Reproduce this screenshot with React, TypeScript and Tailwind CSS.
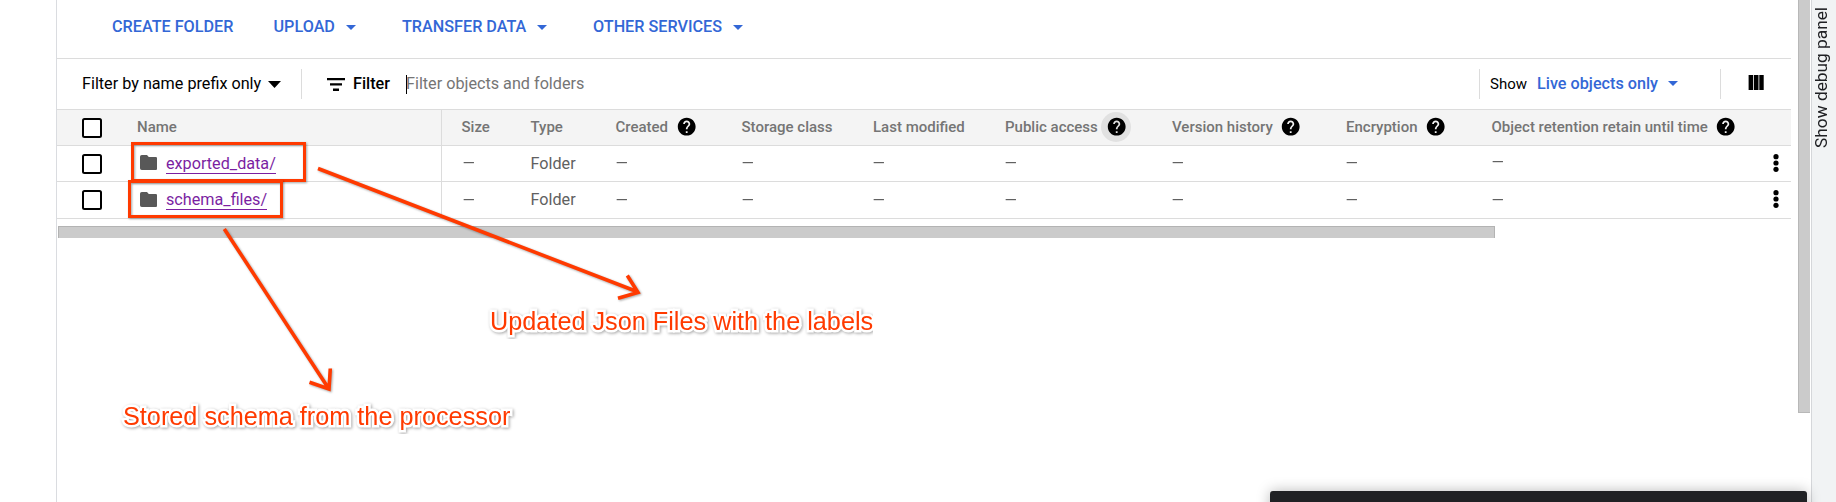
import type { ReactNode } from 'react';

const GRID =
  'grid grid-cols-[80px_305px_88.5px_85px_126px_131.5px_132px_167px_174px_145.5px_1fr] border-b border-[#dcdcdc]';

function Caret({ className = '' }: { className?: string }) {
  return (
    <svg viewBox="0 0 10 5" className={`h-[5px] w-2.5 shrink-0 ${className}`}>
      <path d="M0 0h10L5 5z" fill="currentColor" />
    </svg>
  );
}

function HelpIcon() {
  return (
    <svg viewBox="0 0 24 24" className="size-[21.4px] shrink-0">
      <path d="M12 2C6.48 2 2 6.48 2 12s4.48 10 10 10 10-4.48 10-10S17.52 2 12 2zm1 17h-2v-2h2v2zm2.07-7.75-.9.92C13.45 12.9 13 13.5 13 15h-2v-.5c0-1.1.45-2.1 1.17-2.83l1.24-1.26c.37-.36.59-.86.59-1.41 0-1.1-.9-2-2-2s-2 .9-2 2H8c0-2.21 1.79-4 4-4s4 1.79 4 4c0 .88-.36 1.68-.93 2.25z" />
    </svg>
  );
}

function Checkbox() {
  return <span className="block size-5 rounded-[2.5px] border-2 border-black bg-white" />;
}

function Header({ label, help, hovered }: { label: string; help?: boolean; hovered?: boolean }) {
  return (
    <div className="flex items-center whitespace-nowrap">
      {label}
      {help && (
        <span
          className={
            hovered
              ? 'mb-px ml-[3.5px] flex size-[30px] items-center justify-center rounded-full bg-[#e1e1e1] text-black'
              : 'mb-0.5 ml-[7.5px] text-black'
          }
        >
          <HelpIcon />
        </span>
      )}
    </div>
  );
}

function Dash() {
  return <span className="-ml-px inline-block origin-left scale-x-[1.3]">–</span>;
}

function Row({ name, height, textOffset, lastDash }: { name: string; height: string; textOffset: string; lastDash: string }) {
  return (
    <div className={`${GRID} ${height} text-[16.2px] text-[#616161]`}>
      <div className="flex items-center pl-[25px]">
        <Checkbox />
      </div>
      <div className="flex items-center border-r border-[#dcdcdc] pl-[2.5px]">
        <svg viewBox="0 0 18 15" className="mb-0.5 h-[15px] w-[17.5px]" preserveAspectRatio="none">
          <path d="M1.8 0h5.4L9 2h7.2Q18 2 18 3.8v9.4Q18 15 16.2 15H1.8Q0 15 0 13.2V1.8Q0 0 1.8 0z" fill="#585858" />
        </svg>
        <a className={`ml-[9px] h-[19px] border-b border-[#7b1fa2] leading-[17px] text-[#7b1fa2] ${textOffset}`}>
          {name}
        </a>
      </div>
      <div className="flex items-center pt-0.5 pl-[20.5px]">
        <Dash />
      </div>
      <div className={`flex items-center ${textOffset}`}>Folder</div>
      {['created', 'storage', 'modified', 'access', 'history', 'encryption'].map((key) => (
        <div key={key} className="flex items-center pt-0.5">
          <Dash />
        </div>
      ))}
      <div className="flex items-center justify-between">
        <span className={lastDash}>
          <Dash />
        </span>
        <svg viewBox="0 0 6 18" className="mr-3 mb-0.5 h-[18px] w-1.5">
          <circle cx="3" cy="2.7" r="2.6" fill="#000" />
          <circle cx="3" cy="9" r="2.6" fill="#000" />
          <circle cx="3" cy="15.3" r="2.6" fill="#000" />
        </svg>
      </div>
    </div>
  );
}

function Action({ label, className, menu }: { label: string; className: string; menu?: boolean }) {
  return (
    <div className={`flex shrink-0 items-center whitespace-nowrap ${className}`}>
      {label}
      {menu && <Caret className="ml-[11px]" />}
    </div>
  );
}

function Note({ className, children }: { className: string; children: ReactNode }) {
  return (
    <div
      className={`absolute overflow-hidden font-['Liberation_Sans',sans-serif] text-[25.25px] leading-9 whitespace-nowrap text-[#ff3a00] ${className}`}
    >
      <span className="block pl-2 drop-shadow-[1px_1.5px_1.5px_rgba(0,0,0,0.35)] [-webkit-text-stroke:5px_white] [paint-order:stroke_fill] [stroke-linejoin:round]">
        {children}
      </span>
    </div>
  );
}

export default function App() {
  return (
    <div className="relative flex h-[502px] w-[1836px] overflow-hidden bg-white font-[Roboto,sans-serif] text-black">
      <div className="w-[57px] shrink-0 border-r border-[#dadce0]" />

      <main className="flex w-[1734px] shrink-0 flex-col">
        <div className="flex h-[59px] shrink-0 border-b border-[#dcdcdc] pb-[3px] text-[16.2px] font-medium text-[#3367d6]">
          <Action label="CREATE FOLDER" className="ml-[55px] w-[161.5px]" />
          <Action label="UPLOAD" className="w-[128.5px]" menu />
          <Action label="TRANSFER DATA" className="w-[191px]" menu />
          <Action label="OTHER SERVICES" className="" menu />
        </div>

        <div className="flex h-[51px] shrink-0 items-center border-b border-[#dcdcdc] text-[16.2px] whitespace-nowrap">
          <span className="ml-[25px] w-[186px]">Filter by name prefix only</span>
          <svg viewBox="0 0 13 7" className="h-[7px] w-[13px]">
            <path d="M0 0h13L6.5 7z" />
          </svg>
          <span className="ml-5 h-[30px] border-l border-[#dcdcdc]" />
          <svg viewBox="0 0 18 13" className="ml-[25px] h-[13px] w-[18px]">
            <path d="M0 0h18v2.3H0zM3 5.3h12v2.3H3zM6 10.5h6v2.4H6z" />
          </svg>
          <span className="ml-2 w-[53px] font-medium">Filter</span>
          <span className="h-[19px] border-l border-black" />
          <span className="-ml-px text-[#757575]">Filter objects and folders</span>
          <div className="ml-auto flex h-[30px] items-center border-l border-[#dcdcdc]">
            <span className="ml-2.5 text-[15px]">Show</span>
            <span className="ml-[10px] flex items-center font-medium text-[#3367d6]">
              Live objects only
              <Caret className="ml-2.5" />
            </span>
          </div>
          <div className="mr-[27px] ml-[42px] flex h-[30px] items-center border-l border-[#dcdcdc] pl-[27px]">
            <svg viewBox="0 0 16 15" className="mb-[3px] h-[15px] w-4">
              <path d="M0.6 0h4.6v15H0.6zM6 0h4.5v15H6zM11.3 0h4.4v15h-4.4z" />
            </svg>
          </div>
        </div>

        <div className={`${GRID} h-9 bg-[#f4f4f4] text-[15px] font-medium text-[#757575]`}>
          <div className="flex items-center pt-px pl-[25px]">
            <Checkbox />
          </div>
          <div className="flex items-center border-r border-[#dcdcdc]">Name</div>
          <div className="flex items-center pl-[19.5px]">Size</div>
          <Header label="Type" />
          <Header label="Created" help />
          <Header label="Storage class" />
          <Header label="Last modified" />
          <Header label="Public access" help hovered />
          <Header label="Version history" help />
          <Header label="Encryption" help />
          <Header label="Object retention retain until time" help />
        </div>
        <Row name="exported_data/" height="h-9" textOffset="mt-px" lastDash="mb-px" />
        <Row name="schema_files/" height="h-[37px]" textOffset="mt-0" lastDash="mt-0.5" />

        <div className="mt-[7px] ml-px h-3 w-[1437px] border border-b-0 border-[#b3b3b3] bg-[#cbcbcb]" />
      </main>

      <div className="ml-[7px] h-[413px] w-3 shrink-0 border-b border-l border-[#b8b8b8] bg-[#cbcbcb]" />
      <aside className="ml-px flex w-[25px] shrink-0 justify-start border-l border-[#d5d7da] bg-[#f1f3f4] pt-[5px]">
        <span className="h-[143px] rotate-180 text-[17.3px] leading-[18px] whitespace-nowrap text-[#202124] [writing-mode:vertical-rl]">
          Show debug panel
        </span>
      </aside>

      <div className="absolute top-[491px] left-[1270px] h-8 w-[537px] rounded-[3px] bg-[#202124] shadow-[0_0_14px_rgba(0,0,0,0.28)]" />

      <div className="absolute top-[142px] left-[131px] h-10 w-[175px] border-[3px] border-[#ff3a00] drop-shadow-[1px_1px_1px_rgba(0,0,0,0.35)]" />
      <div className="absolute top-[180px] left-32 h-[38px] w-[155px] border-[3px] border-[#ff3a00] drop-shadow-[1px_1px_1px_rgba(0,0,0,0.35)]" />
      <svg
        viewBox="0 0 700 420"
        className="absolute top-0 left-0 h-[420px] w-[700px] drop-shadow-[1px_1px_1px_rgba(0,0,0,0.35)]"
        fill="none"
        stroke="#ff3a00"
        strokeWidth="3.6"
      >
        <path d="M318 168.5 638 292M627.3 275.5 638 292.5 618 298.3" />
        <path d="M224.3 229 328.6 388.5M330.3 368.5 329 389 309.5 382.3" />
      </svg>
      <Note className="top-[303px] left-[482px] w-[391px]">Updated Json Files with the labels</Note>
      <Note className="top-[398px] left-[115px] w-[410px]">Stored schema from the processor</Note>
    </div>
  );
}
